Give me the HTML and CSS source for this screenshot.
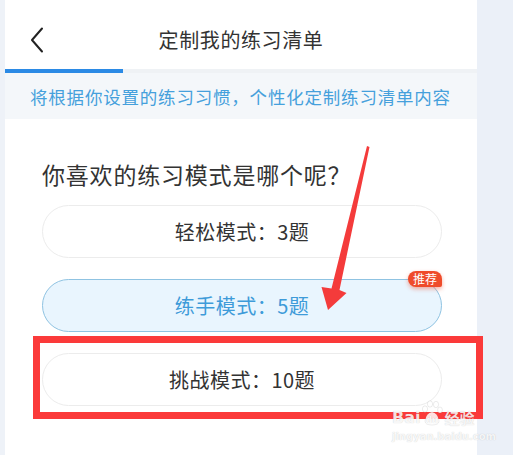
FILE: index.html
```html
<!DOCTYPE html>
<html lang="zh">
<head>
  <meta charset="UTF-8">
  <meta name="viewport" content="width=device-width, initial-scale=1.0">
  <title>定制我的练习清单</title>
  <link rel="stylesheet" href="styles.css">
</head>
<body>
  <div class="side-left"></div>

  <div class="panel">
    <div class="header">
      <div class="back">
        <svg width="14" height="26" viewBox="0 0 14 26">
          <path d="M12 1.5 L2 13 L12 24.5" fill="none" stroke="#222" stroke-width="2" stroke-linecap="round" stroke-linejoin="round"/>
        </svg>
      </div>
      <h1>定制我的练习清单</h1>
      <div></div>
    </div>

    <div class="progress"><div class="progress-fill"></div></div>

    <div class="banner">将根据你设置的练习习惯，个性化定制练习清单内容</div>

    <div class="question">你喜欢的练习模式是哪个呢？</div>

    <div class="options">
      <div class="option">轻松模式：3题</div>
      <div class="option selected">练手模式：5题<span class="badge">推荐</span></div>
      <div class="option">挑战模式：10题</div>
    </div>
  </div>

  <div class="side-right"></div>

  <!-- annotations on top of the screenshot -->
  <div class="highlight"></div>

  <svg class="arrow" width="513" height="455" viewBox="0 0 513 455">
    <polygon points="367,146 369.5,147 339.5,290 346.5,293 328,310 321.5,287 331.5,288.5" fill="#f43b3b"/>
  </svg>

  <div class="watermark">
    <div class="wm-top">
      <span class="wm-bai">Bai</span>
      <svg class="wm-paw" width="22" height="26" viewBox="0 0 22 26">
        <g fill="rgba(255,255,255,0.85)" stroke="rgba(0,0,0,0.1)" stroke-width="0.8">
          <ellipse cx="4" cy="9" rx="2.6" ry="3.2"/>
          <ellipse cx="9" cy="4" rx="2.6" ry="3.2"/>
          <ellipse cx="15" cy="4.5" rx="2.6" ry="3.2"/>
          <ellipse cx="19" cy="10" rx="2.4" ry="3"/>
          <path d="M4 21 Q5 13 11 12 Q17 13 18 21 Q18 25 11 25 Q4 25 4 21 Z"/>
        </g>
        <text x="11" y="22.5" text-anchor="middle" class="wm-du">du</text>
      </svg>
      <span class="wm-jy">经验</span>
    </div>
    <div class="wm-url">jingyan.baidu.com</div>
  </div>
</body>
</html>
```

FILE: styles.css
```css
body {
  margin: 0;
  width: 513px;
  height: 455px;
  overflow: hidden;
  display: flex;
  background: #eef2f8;
  font-family: 'Noto Sans CJK SC', 'Noto Sans', sans-serif;
  color: #333;
  position: relative;
}

.side-left {
  width: 5px;
  background: #eef2f8;
}

.side-right {
  flex: 1;
  background: #ebf0f8;
}

.panel {
  width: 472px;
  background: #fff;
}

.header {
  height: 59px;
  padding-top: 10px;
  display: grid;
  grid-template-columns: 1fr auto 1fr;
  align-items: center;
}

.back {
  padding-left: 25px;
  display: flex;
}

.header h1 {
  margin: 0;
  font-size: 20px;
  font-weight: normal;
  color: #333;
  letter-spacing: 0.6px;
}

.progress {
  height: 4px;
  background: #eff2f5;
}

.progress-fill {
  width: 118px;
  height: 100%;
  background: #2b8ae5;
}

.banner {
  height: 46px;
  display: flex;
  align-items: center;
  padding-left: 25px;
  background: #f4f7fa;
  color: #45a0dc;
  font-size: 17.5px;
  letter-spacing: 0.8px;
}

.question {
  margin: 39px 0 0 37px;
  font-size: 23px;
  line-height: 32px;
  color: #333;
  letter-spacing: 0.8px;
}

.options {
  margin: 15px 0 0 37px;
  width: 400px;
  display: flex;
  flex-direction: column;
  gap: 21px;
}

.option {
  position: relative;
  height: 51px;
  border: 1px solid #ececec;
  border-radius: 27px;
  display: flex;
  justify-content: center;
  align-items: center;
  font-size: 20px;
  letter-spacing: 0.5px;
  color: #333;
}

.option.selected {
  background: #e9f5fe;
  border-color: #8fc3e2;
  color: #3e9bd9;
}

.badge {
  position: absolute;
  top: -9px;
  right: -1px;
  height: 16px;
  line-height: 16px;
  padding: 0 5px;
  font-size: 12px;
  letter-spacing: 0;
  color: #fff;
  background: #ef4b2a;
  border-radius: 8px 8px 2px 8px;
  box-shadow: 0 2px 4px rgba(239, 75, 42, 0.45);
}

.highlight {
  position: absolute;
  left: 33px;
  top: 336px;
  width: 436px;
  height: 69px;
  border: 7px solid #fb3a3a;
}

.arrow {
  position: absolute;
  left: 0;
  top: 0;
}

.watermark {
  position: absolute;
  left: 392px;
  top: 399px;
  width: 92px;
  color: rgba(255, 255, 255, 0.85);
  text-shadow: 0 0 1px rgba(0, 0, 0, 0.22);
}

.wm-top {
  display: flex;
  align-items: flex-end;
  height: 27px;
}

.wm-bai {
  font-family: 'DejaVu Sans', sans-serif;
  font-weight: bold;
  font-size: 16px;
  line-height: 16px;
}

.wm-paw {
  margin: 0 1px;
}

.wm-du {
  font-family: 'DejaVu Sans', sans-serif;
  font-weight: bold;
  font-size: 8px;
  fill: rgba(255, 255, 255, 0.9);
}

.wm-jy {
  font-size: 15px;
  line-height: 16px;
  font-weight: bold;
}

.wm-url {
  margin-top: 5px;
  font-family: 'DejaVu Sans', sans-serif;
  font-size: 10px;
  line-height: 11px;
  font-weight: bold;
}
```
